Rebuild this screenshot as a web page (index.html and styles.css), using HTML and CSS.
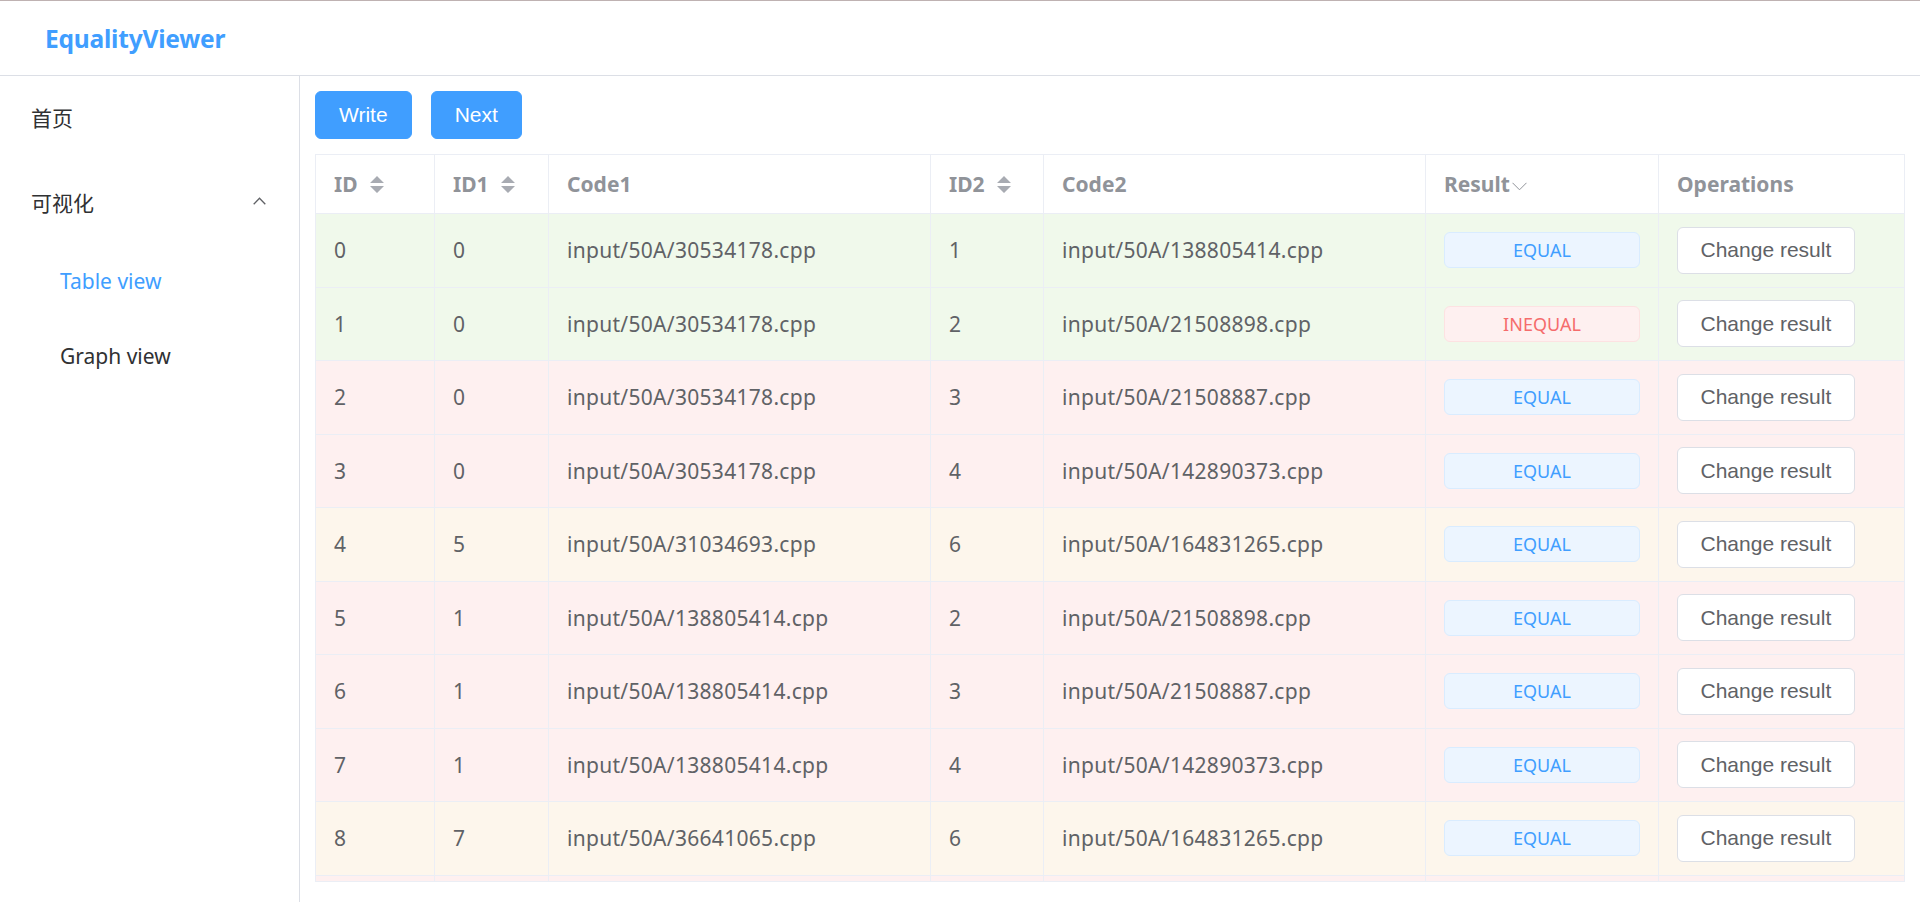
FILE: index.html
```html
<!DOCTYPE html>
<html lang="zh-CN">
<head>
<meta charset="utf-8">
<title>EqualityViewer</title>
<link rel="stylesheet" href="styles.css">
</head>
<body>
<header class="app-header">
  <div class="brand">EqualityViewer</div>
</header>
<div class="layout">
  <aside class="sidebar">
    <ul class="menu">
      <li class="menu-item">首页</li>
      <li class="submenu">
        <div class="submenu-title">
          <span>可视化</span>
          <svg class="submenu-arrow" width="13" height="8" viewBox="0 0 13 8"><path d="M0.7 7.3 L6.5 1.2 L12.3 7.3" fill="none" stroke="#606266" stroke-width="1.3"/></svg>
        </div>
        <ul class="submenu-list">
          <li class="sub-item active">Table view</li>
          <li class="sub-item">Graph view</li>
        </ul>
      </li>
    </ul>
  </aside>
  <main class="main">
    <div class="toolbar">
      <button class="btn btn-primary">Write</button>
      <button class="btn btn-primary">Next</button>
    </div>
    <div class="table-wrap">
      <table class="data-table">
        <colgroup>
          <col class="w-id"><col class="w-id1"><col class="w-code"><col class="w-id2"><col class="w-code"><col class="w-res"><col class="w-ops">
        </colgroup>
        <thead>
          <tr>
            <th><div class="cell">ID<svg class="caret" width="14" height="17" viewBox="0 0 14 17"><path d="M0 7 L7 0 L14 7 Z M0 10 L14 10 L7 17 Z" fill="#a8abb2"/></svg></div></th>
            <th><div class="cell">ID1<svg class="caret" width="14" height="17" viewBox="0 0 14 17"><path d="M0 7 L7 0 L14 7 Z M0 10 L14 10 L7 17 Z" fill="#a8abb2"/></svg></div></th>
            <th><div class="cell">Code1</div></th>
            <th><div class="cell">ID2<svg class="caret" width="14" height="17" viewBox="0 0 14 17"><path d="M0 7 L7 0 L14 7 Z M0 10 L14 10 L7 17 Z" fill="#a8abb2"/></svg></div></th>
            <th><div class="cell">Code2</div></th>
            <th><div class="cell">Result<svg class="filter" width="15" height="9" viewBox="0 0 15 9"><path d="M0.5 0.8 L7.5 7.8 L14.5 0.8" fill="none" stroke="#909399" stroke-width="1"/></svg></div></th>
            <th class="last"><div class="cell">Operations</div></th>
          </tr>
        </thead>
        <tbody>
          <tr class="row-success"><td><div class="cell">0</div></td><td><div class="cell">0</div></td><td><div class="cell">input/50A/30534178.cpp</div></td><td><div class="cell">1</div></td><td><div class="cell">input/50A/138805414.cpp</div></td><td><div class="cell"><span class="tag tag-eq">EQUAL</span></div></td><td class="last"><div class="cell"><button class="btn btn-default">Change result</button></div></td></tr>
          <tr class="row-success"><td><div class="cell">1</div></td><td><div class="cell">0</div></td><td><div class="cell">input/50A/30534178.cpp</div></td><td><div class="cell">2</div></td><td><div class="cell">input/50A/21508898.cpp</div></td><td><div class="cell"><span class="tag tag-neq">INEQUAL</span></div></td><td class="last"><div class="cell"><button class="btn btn-default">Change result</button></div></td></tr>
          <tr class="row-danger"><td><div class="cell">2</div></td><td><div class="cell">0</div></td><td><div class="cell">input/50A/30534178.cpp</div></td><td><div class="cell">3</div></td><td><div class="cell">input/50A/21508887.cpp</div></td><td><div class="cell"><span class="tag tag-eq">EQUAL</span></div></td><td class="last"><div class="cell"><button class="btn btn-default">Change result</button></div></td></tr>
          <tr class="row-danger"><td><div class="cell">3</div></td><td><div class="cell">0</div></td><td><div class="cell">input/50A/30534178.cpp</div></td><td><div class="cell">4</div></td><td><div class="cell">input/50A/142890373.cpp</div></td><td><div class="cell"><span class="tag tag-eq">EQUAL</span></div></td><td class="last"><div class="cell"><button class="btn btn-default">Change result</button></div></td></tr>
          <tr class="row-warning"><td><div class="cell">4</div></td><td><div class="cell">5</div></td><td><div class="cell">input/50A/31034693.cpp</div></td><td><div class="cell">6</div></td><td><div class="cell">input/50A/164831265.cpp</div></td><td><div class="cell"><span class="tag tag-eq">EQUAL</span></div></td><td class="last"><div class="cell"><button class="btn btn-default">Change result</button></div></td></tr>
          <tr class="row-danger"><td><div class="cell">5</div></td><td><div class="cell">1</div></td><td><div class="cell">input/50A/138805414.cpp</div></td><td><div class="cell">2</div></td><td><div class="cell">input/50A/21508898.cpp</div></td><td><div class="cell"><span class="tag tag-eq">EQUAL</span></div></td><td class="last"><div class="cell"><button class="btn btn-default">Change result</button></div></td></tr>
          <tr class="row-danger"><td><div class="cell">6</div></td><td><div class="cell">1</div></td><td><div class="cell">input/50A/138805414.cpp</div></td><td><div class="cell">3</div></td><td><div class="cell">input/50A/21508887.cpp</div></td><td><div class="cell"><span class="tag tag-eq">EQUAL</span></div></td><td class="last"><div class="cell"><button class="btn btn-default">Change result</button></div></td></tr>
          <tr class="row-danger"><td><div class="cell">7</div></td><td><div class="cell">1</div></td><td><div class="cell">input/50A/138805414.cpp</div></td><td><div class="cell">4</div></td><td><div class="cell">input/50A/142890373.cpp</div></td><td><div class="cell"><span class="tag tag-eq">EQUAL</span></div></td><td class="last"><div class="cell"><button class="btn btn-default">Change result</button></div></td></tr>
          <tr class="row-warning"><td><div class="cell">8</div></td><td><div class="cell">7</div></td><td><div class="cell">input/50A/36641065.cpp</div></td><td><div class="cell">6</div></td><td><div class="cell">input/50A/164831265.cpp</div></td><td><div class="cell"><span class="tag tag-eq">EQUAL</span></div></td><td class="last"><div class="cell"><button class="btn btn-default">Change result</button></div></td></tr>
          <tr class="row-danger"><td></td><td></td><td></td><td></td><td></td><td></td><td class="last"></td></tr>
        </tbody>
      </table>
    </div>
  </main>
</div>
</body>
</html>
```

FILE: styles.css
```css
* { box-sizing: border-box; }

html, body {
  margin: 0;
  padding: 0;
  height: 100%;
  overflow: hidden;
  background: #ffffff;
  font-family: "Noto Sans", "Noto Sans CJK SC", sans-serif;
  color: #303133;
}

.app-header {
  height: 76px;
  border-top: 1px solid #bfb2b2;
  border-bottom: 1px solid #dcdfe6;
  display: flex;
  align-items: center;
  padding-left: 45px;
}

.brand {
  font-size: 24.5px;
  font-weight: 700;
  color: #409eff;
  letter-spacing: -0.2px;
}

.layout {
  display: flex;
  height: calc(100% - 76px);
}

.sidebar {
  width: 300px;
  flex: 0 0 300px;
  border-right: 1px solid #dcdfe6;
}

.menu, .submenu-list {
  list-style: none;
  margin: 0;
  padding: 0;
}

.menu-item {
  height: 84px;
  line-height: 84px;
  padding-left: 31px;
  font-size: 21px;
  color: #303133;
}

.submenu-title {
  height: 84px;
  display: flex;
  align-items: center;
  justify-content: space-between;
  padding-left: 31px;
  padding-right: 33px;
  font-size: 21px;
  color: #303133;
}

.submenu-arrow { display: block; margin-top: -3px; }

.sub-item {
  height: 75px;
  line-height: 75px;
  padding-left: 60px;
  font-size: 21px;
  color: #303133;
}

.sub-item.active { color: #409eff; }

.main {
  flex: 1;
  padding: 15px 15px 0 15px;
  min-width: 0;
}

.toolbar {
  display: flex;
  gap: 19px;
  margin-bottom: 15px;
}

.btn {
  height: 48px;
  padding: 0 23px;
  border-radius: 6px;
  font-family: "Liberation Sans", Arial, sans-serif;
  font-size: 21px;
  cursor: pointer;
}

.btn-primary {
  background: #409eff;
  border: 1px solid #409eff;
  color: #ffffff;
}

.btn-default {
  height: 47px;
  background: #ffffff;
  border: 1px solid #dcdfe6;
  color: #606266;
  padding: 0 22.5px;
}

.table-wrap {
  height: 728px;
  border: 1px solid #ebeef5;
  overflow: hidden;
}

.data-table {
  width: 100%;
  table-layout: fixed;
  border-collapse: separate;
  border-spacing: 0;
  font-size: 21px;
  color: #606266;
}

.w-id { width: 119px; }
.w-id1 { width: 114px; }
.w-code { width: 382px; }
.w-id2 { width: 113px; }
.w-res { width: 233px; }
.w-ops { width: auto; }

.data-table th,
.data-table td {
  border-right: 1px solid #ebeef5;
  border-bottom: 1px solid #ebeef5;
  text-align: left;
  vertical-align: middle;
}

.data-table th.last,
.data-table td.last { border-right: none; }

.data-table th {
  height: 59px;
  padding: 0;
  color: #909399;
  font-weight: 700;
  background: #ffffff;
}

.data-table td {
  height: 73.5px;
  padding: 0;
}

.data-table td .cell { letter-spacing: 0.3px; }

.cell {
  padding: 0 18px;
  display: flex;
  align-items: center;
  white-space: nowrap;
  line-height: 34px;
}

.caret { margin-left: 12px; display: block; }
.filter { margin-left: 2px; display: block; margin-top: 4px; }

.row-success td { background: #f0f9eb; }
.row-danger td { background: #fef0f0; }
.row-warning td { background: #fdf6ec; }

.tag {
  display: block;
  width: 100%;
  height: 36px;
  line-height: 34px;
  border-radius: 6px;
  text-align: center;
  font-size: 18px;
  letter-spacing: 0;
  border: 1px solid transparent;
}

.tag-eq {
  background: #ecf5ff;
  border-color: #d9ecff;
  color: #409eff;
}

.tag-neq {
  background: #fef0f0;
  border-color: #fde2e2;
  color: #f56c6c;
}

.data-table td .btn { letter-spacing: 0; }
```
